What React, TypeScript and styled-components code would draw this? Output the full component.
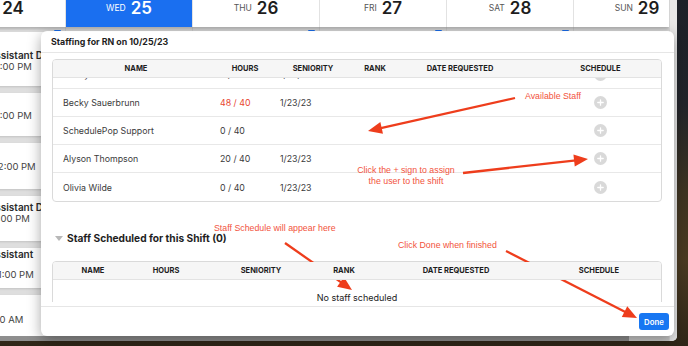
import React, { useLayoutEffect, useRef } from "react";
import styled, { createGlobalStyle } from "styled-components";

type Staff = { name: string; hours: string; over?: boolean; seniority: string };

const STAFF: Staff[] = [
    { name: "Alex Morgan", hours: "36 / 40", seniority: "1/23/23" },
    { name: "Megan Rapinoe", hours: "12 / 40", seniority: "1/23/23" },
    { name: "Sophia Smith", hours: "0 / 40", seniority: "1/23/23" },
    { name: "Rose Lavelle", hours: "24 / 40", seniority: "1/23/23" },
    { name: "Lindsey Horan", hours: "8 / 40", seniority: "1/23/23" },
    { name: "Trinity Rodman", hours: "0 / 40", seniority: "1/23/23" },
    { name: "Becky Sauerbrunn", hours: "48 / 40", over: true, seniority: "1/23/23" },
    { name: "SchedulePop Support", hours: "0 / 40", seniority: "" },
    { name: "Alyson Thompson", hours: "20 / 40", seniority: "1/23/23" },
    { name: "Olivia Wilde", hours: "0 / 40", seniority: "1/23/23" },
];

const DAYS = [
    { dow: "TUE", day: 24, mark: true },
    { dow: "WED", day: 25, active: true },
    { dow: "THU", day: 26, mark: true },
    { dow: "FRI", day: 27, mark: true },
    { dow: "SAT", day: 28, mark: true },
    { dow: "SUN", day: 29 },
];

// shift blocks peeking out on the left of the modal
const SHIFTS = [
    { h: 54, pt: 17, title: "Assistant Day", time: "5:00 PM", shift: -6 },
    { h: 43, pt: 17, time: "5:00 PM", shift: -6 },
    { h: 46, pt: 18, time: "12:00 PM", shift: -6 },
    { h: 45, pt: 5, title: "Assistant Day", time: "5:00 PM", shift: -8 },
    { h: 40, pt: 0, title: "Assistant", time: "11:00 PM", shift: -6, gap: 9 },
    { h: 60, pt: 19, time: "10:00 AM", shift: -19 },
];

const COLS_AVAILABLE = "166px 52px 84px 40px 130px 121px";
const COLS_SCHEDULED = "80px 66px 124px 42px 182px 1fr";

export default function App() {
    const bodyRef = useRef<HTMLDivElement>(null);
    const listRef = useRef<HTMLDivElement>(null);

    useLayoutEffect(() => {
        if (bodyRef.current) bodyRef.current.scrollTop = 59;
        if (listRef.current) listRef.current.scrollTop = listRef.current.scrollHeight;
    }, []);

    return (
        <Page>
            <GlobalStyle />

            {/* --- calendar behind the modal --- */}
            <CalendarWindow>
                <CalendarMain>
                    <HeaderRow>
                        {DAYS.map((d) => (
                            <DayCell key={d.day} $active={!!d.active}>
                                <DayName $active={!!d.active}>{d.dow}</DayName>
                                <DayNum $active={!!d.active}>{d.day}</DayNum>
                            </DayCell>
                        ))}
                    </HeaderRow>
                    <WeekBody>
                        {DAYS.map((d, i) => (
                            <DayColumn key={d.day}>
                                <ColumnTop>{d.mark && <AddMark />}</ColumnTop>
                                {i === 0 && (
                                    <ShiftList>
                                        {SHIFTS.map((s, j) => (
                                            <ShiftCard key={j} $h={s.h} $pt={s.pt}>
                                                {s.title && <ShiftTitle>{s.title}</ShiftTitle>}
                                                <ShiftTime $shift={s.shift} $gap={s.gap ?? 0}>
                                                    {s.time}
                                                </ShiftTime>
                                            </ShiftCard>
                                        ))}
                                    </ShiftList>
                                )}
                            </DayColumn>
                        ))}
                    </WeekBody>
                    <HScroll />
                </CalendarMain>
                <Gutter />
            </CalendarWindow>

            {/* --- staffing modal --- */}
            <Dialog>
                <DialogHeader>Staffing for RN on 10/25/23</DialogHeader>
                <DialogBody>
                    <BodyScroll ref={bodyRef}>
                        <SectionTitle>
                            <Caret />
                            Available Staff (10)
                        </SectionTitle>

                        <TableCard>
                            <ListScroll ref={listRef}>
                                <HeadRow $cols={COLS_AVAILABLE}>
                                    <HeadCell>NAME</HeadCell>
                                    <HeadCell>HOURS</HeadCell>
                                    <HeadCell>SENIORITY</HeadCell>
                                    <HeadCell>RANK</HeadCell>
                                    <HeadCell>DATE REQUESTED</HeadCell>
                                    <HeadCell $shift={30}>SCHEDULE</HeadCell>
                                </HeadRow>
                                {STAFF.map((s, i) => (
                                    <Row key={s.name} $cols={COLS_AVAILABLE} $last={i === STAFF.length - 1}>
                                        <Cell $pad={10}>{s.name}</Cell>
                                        <Cell $pad={1} $red={s.over}>{s.hours}</Cell>
                                        <Cell $pad={9}>{s.seniority}</Cell>
                                        <Cell />
                                        <Cell />
                                        <IconCell>
                                            <AddButton>
                                                <svg width="13" height="13" viewBox="0 0 13 13">
                                                    <circle cx="6.5" cy="6.5" r="6.5" fill="#d9d9d9" />
                                                    <path d="M6.5 3.8v5.4M3.8 6.5h5.4" stroke="#fff" strokeWidth="1.3" strokeLinecap="round" />
                                                </svg>
                                            </AddButton>
                                        </IconCell>
                                    </Row>
                                ))}
                            </ListScroll>
                        </TableCard>

                        <SectionTitle>
                            <Caret />
                            Staff Scheduled for this Shift (0)
                        </SectionTitle>

                        <TableCard>
                            <HeadRow $cols={COLS_SCHEDULED}>
                                <HeadCell>NAME</HeadCell>
                                <HeadCell>HOURS</HeadCell>
                                <HeadCell>SENIORITY</HeadCell>
                                <HeadCell>RANK</HeadCell>
                                <HeadCell>DATE REQUESTED</HeadCell>
                                <HeadCell $shift={-10}>SCHEDULE</HeadCell>
                            </HeadRow>
                            <EmptyRow>No staff scheduled</EmptyRow>
                        </TableCard>
                        <BodyEnd />
                    </BodyScroll>
                </DialogBody>
                <DialogFooter>
                    <DoneButton>Done</DoneButton>
                </DialogFooter>
            </Dialog>

            {/* --- tutorial annotations --- */}
            <Arrows width="688" height="346" viewBox="0 0 688 346">
                <Arrow x1={515} y1={98} x2={368} y2={131} />
                <Arrow x1={463} y1={173} x2={588} y2={159} />
                <Arrow x1={285} y1={243} x2={352} y2={290} />
                <Arrow x1={506} y1={251} x2={637} y2={318} />
            </Arrows>
            <Note $x={525} $y={91}>Available Staff</Note>
            <Note $x={356} $y={165} $center>
                Click the + sign to assign
                <br />
                the user to the shift
            </Note>
            <Note $x={214} $y={223}>Staff Schedule will appear here</Note>
            <Note $x={398} $y={240}>Click Done when finished</Note>
        </Page>
    );
}

const Arrow: React.FC<{ x1: number; y1: number; x2: number; y2: number }> = ({ x1, y1, x2, y2 }) => {
    const len = Math.hypot(x2 - x1, y2 - y1);
    const ux = (x2 - x1) / len;
    const uy = (y2 - y1) / len;
    const head = 14;
    const half = 6;
    const bx = x2 - ux * head;
    const by = y2 - uy * head;
    const pts = `${x2},${y2} ${bx - uy * half},${by + ux * half} ${bx + uy * half},${by - ux * half}`;
    return (
        <g>
            <line x1={x1} y1={y1} x2={bx + ux * 2} y2={by + uy * 2} stroke="#ee3d1c" strokeWidth="2.3" />
            <polygon points={pts} fill="#ee3d1c" />
        </g>
    );
};

/* ---- Global ---- */
const GlobalStyle = createGlobalStyle`
    html, body {
        margin: 0;
        padding: 0;
    }
    body {
        width: 688px;
        height: 346px;
        overflow: hidden;
        font-family: Inter, "Noto Sans", sans-serif;
        -webkit-font-smoothing: antialiased;
    }
`;

const Page = styled.div`
    position: relative;
    width: 688px;
    height: 346px;
    overflow: hidden;
    background: linear-gradient(180deg, #1c2129 0%, #22242a 30%, #3d3322 55%, #4a3a22 75%, #2f2618 100%);
`;

/* ---- Calendar ---- */
const CalendarWindow = styled.div`
    width: 677px;
    height: 341px;
    display: flex;
    overflow: hidden;
    background: #ececec;
    border-bottom-right-radius: 5px;
`;

const CalendarMain = styled.div`
    width: 670px;
    display: flex;
    flex-direction: column;
    overflow: hidden;
    background: #dedede;
`;

const Gutter = styled.div`
    width: 7px;
    background: #e8e8e8;
    border-left: 1px solid #d4d4d4;
`;

const HeaderRow = styled.div`
    display: flex;
    height: 27px;
    flex-shrink: 0;
    margin-left: -61px;
    background: #fff;
    box-shadow: 0 2px 3px rgba(0, 0, 0, 0.22);
    position: relative;
    z-index: 1;
`;

const DayCell = styled.div<{ $active: boolean }>`
    width: 127px;
    flex-shrink: 0;
    box-sizing: border-box;
    display: flex;
    justify-content: center;
    align-items: center;
    gap: 5px;
    padding-bottom: 10px;
    border-right: 1px solid #e2e2e2;
    background: ${({ $active }) => ($active ? "#1a6ff0" : "#fff")};
`;

const DayName = styled.span<{ $active: boolean }>`
    font-size: 8.5px;
    color: ${({ $active }) => ($active ? "#fff" : "#555")};
    margin-top: -2px;
`;

const DayNum = styled.span<{ $active: boolean }>`
    font-size: 17px;
    line-height: 17px;
    font-weight: 600;
    color: ${({ $active }) => ($active ? "#fff" : "#1d1d1d")};
`;

const WeekBody = styled.div`
    flex: 1;
    display: flex;
    margin-left: -61px;
    min-height: 0;
`;

const DayColumn = styled.div`
    width: 127px;
    flex-shrink: 0;
    box-sizing: border-box;
    display: flex;
    flex-direction: column;
    border-right: 1px solid #d0d0d0;
`;

const ColumnTop = styled.div`
    height: 5px;
    flex-shrink: 0;
    display: flex;
    justify-content: flex-end;
    padding-right: 4px;
`;

const AddMark = styled.div`
    width: 7px;
    height: 4px;
    margin-top: 3px;
    border-radius: 1px;
    background: #1a6ff0;
`;

const ShiftList = styled.div`
    display: flex;
    flex-direction: column;
    gap: 7px;
`;

const ShiftCard = styled.div<{ $h: number; $pt: number }>`
    height: ${({ $h }) => $h}px;
    flex-shrink: 0;
    box-sizing: border-box;
    margin: 0 4px;
    padding: ${({ $pt }) => $pt}px 0 0 57px;
    background: #fff;
    box-shadow: 0 1px 2px rgba(0, 0, 0, 0.12);
    white-space: nowrap;
`;

const ShiftTitle = styled.div`
    margin-left: -12px;
    font-size: 10px;
    line-height: 12px;
    font-weight: 600;
    color: #2b2b2b;
`;

const ShiftTime = styled.div<{ $shift: number; $gap: number }>`
    margin-left: ${({ $shift }) => $shift}px;
    margin-top: ${({ $gap }) => $gap}px;
    font-size: 9.5px;
    line-height: 12px;
    color: #444;
`;

const HScroll = styled.div`
    height: 5px;
    flex-shrink: 0;
    background: linear-gradient(90deg, #8e8e8e 0%, #8e8e8e 94%, #c9c9c9 94%);
`;

/* ---- Modal ---- */
const Dialog = styled.div`
    position: absolute;
    left: 41px;
    top: 31px;
    width: 633px;
    height: 305px;
    display: flex;
    flex-direction: column;
    background: #fff;
    border-radius: 6px;
    box-shadow: 0 4px 14px rgba(0, 0, 0, 0.35);
    overflow: hidden;
`;

const DialogHeader = styled.div`
    height: 22px;
    flex-shrink: 0;
    box-sizing: border-box;
    display: flex;
    align-items: center;
    padding-left: 10px;
    border-bottom: 1px solid #e6e6e6;
    font-size: 8.8px;
    font-weight: 700;
    color: #1e1e1e;
`;

const DialogBody = styled.div`
    padding: 6px 11px 4px 11px;
    flex-shrink: 0;
`;

const BodyScroll = styled.div`
    height: 243px;
    overflow-y: scroll;
    padding-right: 1px;

    &::-webkit-scrollbar { width: 8px; }
    &::-webkit-scrollbar-track {
        background: #f4f4f4;
        border-left: 1px solid #e6e6e6;
    }
    &::-webkit-scrollbar-thumb {
        background: #c1c1c1;
        border-radius: 4px;
        border: 1.5px solid transparent;
        background-clip: padding-box;
    }
`;

const SectionTitle = styled.div`
    height: 14px;
    padding: 29px 0 16px 3px;
    display: flex;
    align-items: center;
    gap: 4px;
    font-size: 10.2px;
    font-weight: 700;
    color: #1f1f1f;
`;

const Caret = styled.span`
    width: 0;
    height: 0;
    border-left: 4px solid transparent;
    border-right: 4px solid transparent;
    border-top: 5px solid #b8b8b8;
`;

const TableCard = styled.div`
    border: 1px solid #dadada;
    border-radius: 4px;
    overflow: hidden;
    background: #fff;
`;

const ListScroll = styled.div`
    height: 141px;
    overflow-y: scroll;

    &::-webkit-scrollbar { width: 7px; }
    &::-webkit-scrollbar-track {
        background: #fff;
        border-left: 1px solid #ececec;
    }
    &::-webkit-scrollbar-thumb {
        background: #c4c4c4;
        border-radius: 3px;
        border: 1px solid transparent;
        background-clip: padding-box;
    }
`;

const HeadRow = styled.div<{ $cols: string }>`
    position: sticky;
    top: 0;
    z-index: 1;
    display: grid;
    grid-template-columns: ${({ $cols }) => $cols};
    align-items: center;
    height: 18px;
    box-sizing: border-box;
    background: #f6f6f6;
    border-bottom: 1px solid #e3e3e3;
`;

const HeadCell = styled.div<{ $shift?: number }>`
    text-align: center;
    font-size: 7.5px;
    font-weight: 700;
    color: #1d1d1d;
    white-space: nowrap;
    padding-left: ${({ $shift }) => ($shift && $shift > 0 ? $shift : 0)}px;
    padding-right: ${({ $shift }) => ($shift && $shift < 0 ? -$shift : 0)}px;
`;

const Row = styled.div<{ $cols: string; $last: boolean }>`
    display: grid;
    grid-template-columns: ${({ $cols }) => $cols};
    align-items: center;
    height: 28px;
    box-sizing: border-box;
    border-bottom: ${({ $last }) => ($last ? "none" : "1px solid #e8e8e8")};
`;

const Cell = styled.div<{ $pad?: number; $red?: boolean }>`
    padding-left: ${({ $pad }) => $pad ?? 0}px;
    font-size: 8.8px;
    color: ${({ $red }) => ($red ? "#e8452f" : "#3b3b3b")};
    white-space: nowrap;
`;

const IconCell = styled.div`
    display: flex;
    justify-content: center;
    padding-left: 30px;
`;

const AddButton = styled.div`
    width: 13px;
    height: 13px;
    display: flex;
`;

const EmptyRow = styled.div`
    height: 34px;
    display: flex;
    align-items: center;
    justify-content: center;
    font-size: 9px;
    color: #222;
`;

const BodyEnd = styled.div`
    height: 4px;
`;

const DialogFooter = styled.div`
    flex: 1;
    display: flex;
    justify-content: flex-end;
    align-items: flex-start;
    padding: 6px 5px 0 0;
    border-top: 1px solid #e6e6e6;
`;

const DoneButton = styled.button`
    width: 30px;
    height: 17px;
    padding: 0;
    border: none;
    border-radius: 3px;
    background: #1877f2;
    color: #fff;
    font-family: Inter, sans-serif;
    font-size: 7.8px;
    font-weight: 600;
    cursor: pointer;
`;

/* ---- Annotations ---- */
const Arrows = styled.svg`
    position: absolute;
    left: 0;
    top: 0;
    pointer-events: none;
`;

const Note = styled.div<{ $x: number; $y: number; $center?: boolean }>`
    position: absolute;
    left: ${({ $x }) => $x}px;
    top: ${({ $y }) => $y}px;
    width: ${({ $center }) => ($center ? "100px" : "auto")};
    text-align: ${({ $center }) => ($center ? "center" : "left")};
    font-family: "Liberation Sans", Arial, sans-serif;
    font-size: 8.8px;
    line-height: 11px;
    color: #f2533d;
    white-space: nowrap;
`;
